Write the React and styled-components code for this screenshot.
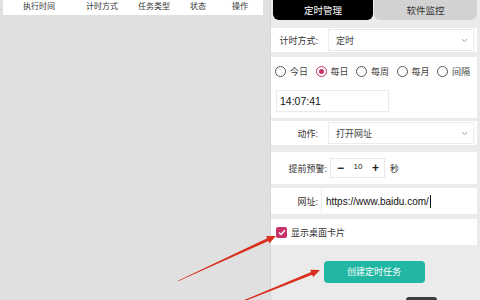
import React from 'react'
import styled, { createGlobalStyle } from 'styled-components'

const GlobalStyle = createGlobalStyle`
    body {
        margin: 0;
        font-family: "Liberation Sans", "Noto Sans CJK SC", sans-serif;
    }
`

const Screen = styled.div`
    position: relative;
    display: flex;
    width: 480px;
    height: 300px;
    overflow: hidden;
    background: #e0e0e0;
`

const LeftPane = styled.div`
    width: 270px;
    padding-left: 3px;
    box-sizing: border-box;
`

const TableHead = styled.div`
    display: grid;
    grid-template-columns: 72px 54px 50px 38px 46px;
    width: 260px;
    height: 15px;
    background: #fff;
    font-size: 8px;
    color: #333;
`

const HeadCell = styled.div`
    text-align: center;
    line-height: 13px;
`

const RightPane = styled.div`
    flex: 1;
    display: flex;
    flex-direction: column;
    border-left: 1px solid #d6d6d6;
    background: #ebebeb;
    padding-right: 3px;
    font-size: 9px;
    color: #333;
`

const Tabs = styled.div`
    display: flex;
    gap: 1px;
    margin-left: 2px;
    height: 20px;
`

const Tab = styled.div`
    flex: ${p => p.$grow};
    display: flex;
    align-items: center;
    justify-content: center;
    border-radius: 0 0 6px 6px;
    background: ${p => (p.$active ? '#000' : '#d2d2d2')};
    color: ${p => (p.$active ? '#fff' : '#333')};
    font-size: 9.5px;
`

const Card = styled.div`
    display: flex;
    flex-direction: ${p => (p.$column ? 'column' : 'row')};
    align-items: ${p => (p.$column ? 'flex-start' : 'center')};
    height: ${p => p.$h}px;
    margin-top: ${p => p.$mt}px;
    background: #fff;
    box-sizing: border-box;
`

const Label = styled.div`
    flex-shrink: 0;
    width: ${p => p.$w}px;
    text-align: right;
    color: #333;
`

const Select = styled.div`
    flex: 1;
    display: flex;
    align-items: center;
    justify-content: space-between;
    height: 22px;
    margin: 0 3px 0 ${p => p.$ml}px;
    padding: 0 5px 0 7px;
    border: 1px solid #ececec;
    box-sizing: border-box;
    color: #444;
`

const Chevron = () => (
    <svg width="7" height="5" viewBox="0 0 7 5">
        <path d="M1 1.2 L3.5 3.6 L6 1.2" fill="none" stroke="#999" strokeWidth="0.9" />
    </svg>
)

const RadioRow = styled.div`
    display: flex;
    gap: 7.5px;
    margin: 8.5px 0 0 4px;
`

const RadioItem = styled.div`
    display: flex;
    align-items: center;
    gap: 4px;
    height: 11px;
    color: #444;
`

const Circle = styled.span`
    position: relative;
    width: 11px;
    height: 11px;
    border-radius: 50%;
    border: 1px solid ${p => (p.$on ? '#c8326a' : '#555')};
    box-sizing: border-box;
    &::after {
        content: '';
        display: ${p => (p.$on ? 'block' : 'none')};
        position: absolute;
        left: 2px;
        top: 2px;
        width: 5px;
        height: 5px;
        border-radius: 50%;
        background: #c8326a;
    }
`

const TimeBox = styled.div`
    width: 113px;
    height: 22px;
    margin: 13px 0 0 5px;
    padding-left: 3px;
    border: 1px solid #ebebeb;
    box-sizing: border-box;
    font-size: 10.5px;
    line-height: 20px;
    color: #111;
`

const Stepper = styled.div`
    display: flex;
    align-items: center;
    justify-content: space-between;
    width: 55px;
    height: 20px;
    margin-left: 3px;
    padding: 0 5px 0 6px;
    border: 1px solid #e8e8e8;
    box-sizing: border-box;
    color: #222;
`

const StepSign = styled.span`
    font-size: 12px;
    font-weight: bold;
    line-height: 1;
`

const StepValue = styled.span`
    font-size: 8px;
    margin-top: -3px;
`

const Unit = styled.span`
    margin-left: 5px;
`

const UrlInput = styled.div`
    flex: 1;
    display: flex;
    align-items: center;
    height: 24px;
    margin: 0 3px 0 3px;
    padding-left: 4px;
    border-left: 1px solid #ececec;
    font-size: 10px;
    color: #111;
`

const Caret = styled.span`
    width: 1px;
    height: 13px;
    margin-left: 1px;
    background: #111;
`

const CheckBox = styled.span`
    display: flex;
    align-items: center;
    justify-content: center;
    width: 11px;
    height: 11px;
    margin: 0 4px 0 5px;
    border-radius: 2px;
    background: #c8326a;
`

const Button = styled.div`
    align-self: center;
    width: 101px;
    height: 22px;
    margin-top: 16px;
    border-radius: 4px;
    background: #21b7a2;
    color: #fff;
    font-size: 9px;
    line-height: 22px;
    text-align: center;
`

const PeekTip = styled.div`
    position: absolute;
    left: 406px;
    top: 297px;
    width: 31px;
    height: 6px;
    border-radius: 3px 3px 0 0;
    background: #3d3d3d;
`

const Overlay = styled.svg`
    position: absolute;
    left: 0;
    top: 0;
    pointer-events: none;
`

const radios = ['今日', '每日', '每周', '每月', '间隔']

export default function App() {
    return (
        <>
            <GlobalStyle />
            <Screen>
                <LeftPane>
                    <TableHead>
                        {['执行时间', '计时方式', '任务类型', '状态', '操作'].map(t => (
                            <HeadCell key={t}>{t}</HeadCell>
                        ))}
                    </TableHead>
                </LeftPane>
                <RightPane>
                    <Tabs>
                        <Tab $active $grow={100}>定时管理</Tab>
                        <Tab $grow={103}>软件监控</Tab>
                    </Tabs>
                    <Card $h={24} $mt={8}>
                        <Label $w={47}>计时方式:</Label>
                        <Select $ml={10}>定时<Chevron /></Select>
                    </Card>
                    <Card $h={61} $mt={5} $column>
                        <RadioRow>
                            {radios.map(r => (
                                <RadioItem key={r}>
                                    <Circle $on={r === '每日'} />
                                    {r}
                                </RadioItem>
                            ))}
                        </RadioRow>
                        <TimeBox>14:07:41</TimeBox>
                    </Card>
                    <Card $h={24} $mt={3}>
                        <Label $w={47}>动作:</Label>
                        <Select $ml={10}>打开网址<Chevron /></Select>
                    </Card>
                    <Card $h={32} $mt={7}>
                        <Label $w={56}>提前预警:</Label>
                        <Stepper>
                            <StepSign>−</StepSign>
                            <StepValue>10</StepValue>
                            <StepSign>+</StepSign>
                        </Stepper>
                        <Unit>秒</Unit>
                    </Card>
                    <Card $h={26} $mt={4}>
                        <Label $w={47}>网址:</Label>
                        <UrlInput>https://www.baidu.com/<Caret /></UrlInput>
                    </Card>
                    <Card $h={26} $mt={5}>
                        <CheckBox>
                            <svg width="8" height="7" viewBox="0 0 8 7">
                                <path d="M1 3.6 L3 5.4 L7 1.2" fill="none" stroke="#fff" strokeWidth="1.4" />
                            </svg>
                        </CheckBox>
                        显示桌面卡片
                    </Card>
                    <Button>创建定时任务</Button>
                </RightPane>
                <PeekTip />
                <Overlay width="480" height="300" viewBox="0 0 480 300">
                    <polygon
                        fill="#d92f1f"
                        points="178.12,281.27 268.42,241.06 269.46,243.33 276,236 266.14,236.07 267.18,238.34 177.88,280.73"
                    />
                    <polygon
                        fill="#d92f1f"
                        points="236.19,304.46 312.22,274.77 313.16,277.09 320,270 310.16,269.67 311.1,271.99 235.81,303.54"
                    />
                </Overlay>
            </Screen>
        </>
    )
}
